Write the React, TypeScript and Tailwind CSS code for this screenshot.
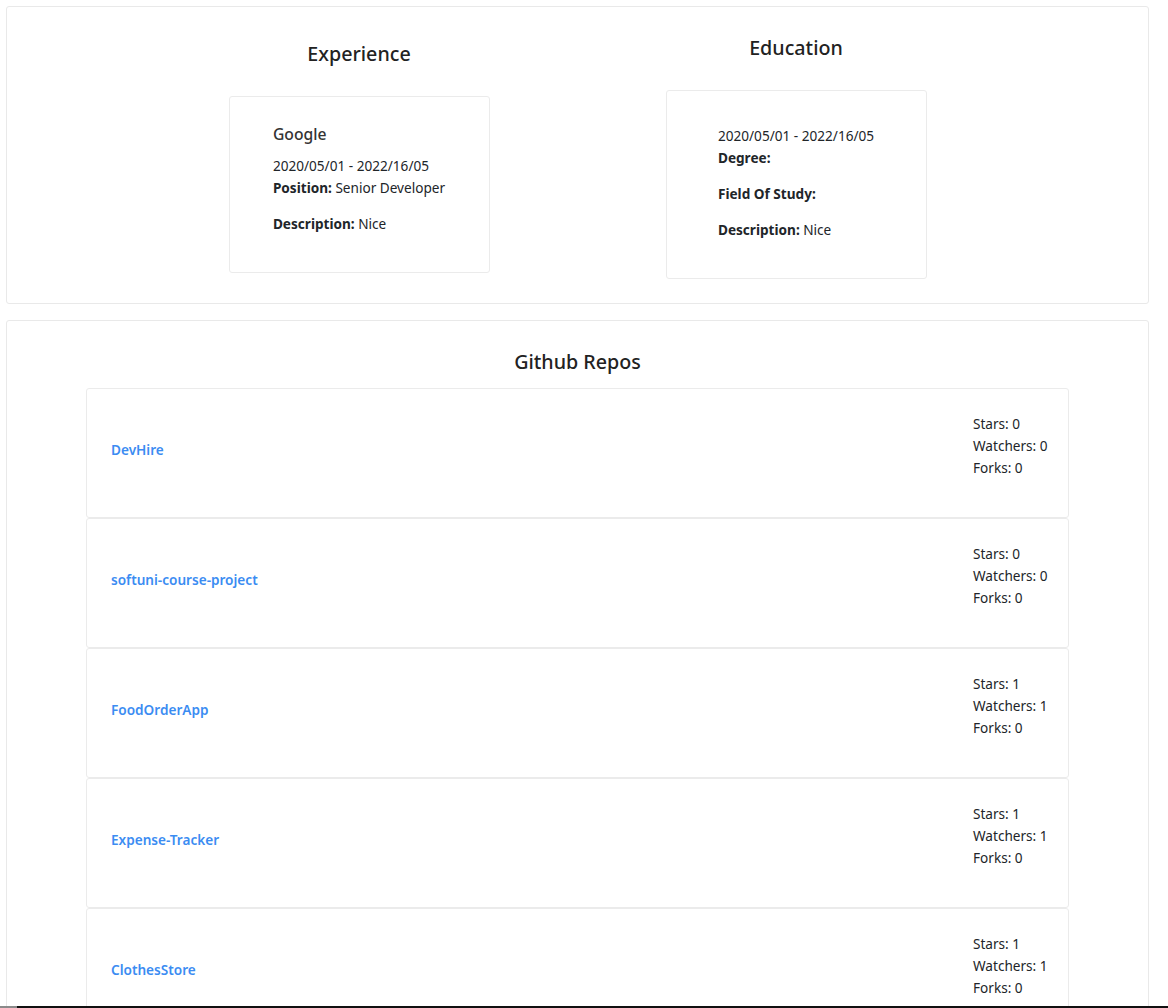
import React from 'react';

const repos = [
  { name: 'DevHire', stars: 0, watchers: 0, forks: 0 },
  { name: 'softuni-course-project', stars: 0, watchers: 0, forks: 0 },
  { name: 'FoodOrderApp', stars: 1, watchers: 1, forks: 0 },
  { name: 'Expense-Tracker', stars: 1, watchers: 1, forks: 0 },
  { name: 'ClothesStore', stars: 1, watchers: 1, forks: 0 },
];

const Label: React.FC<{ label: string; value?: string }> = ({ label, value }) => (
  <p className="mb-[14px]">
    <strong className="font-bold">{label}:</strong>
    {value ? ` ${value}` : ''}
  </p>
);

export default function App() {
  return (
    <div className="min-h-screen bg-white text-[13.6px] leading-[22px] text-[#212529] font-['Noto_Sans','Open_Sans',sans-serif]">
      <div className="pl-[6px] pr-[19px] pt-[6px] pb-[20px] flex flex-col gap-[16px]">
        {/* Experience / Education */}
        <section className="border border-[#e9e9e9] rounded-[3px] pt-[28px] pb-[24px] flex justify-center items-center">
          <div className="w-[437px] flex flex-col items-center">
            <h3 className="text-[19.7px] leading-[25px] font-medium text-[#222] mb-[30px]">Experience</h3>
            <div className="w-[261px] border border-[#ebebeb] rounded-[3px] pt-[25px] pb-[23px] flex justify-center">
              <div>
                <h4 className="text-[15.7px] leading-[24px] font-medium text-[#333] mb-[9px]">Google</h4>
                <p>2020/05/01 - 2022/16/05</p>
                <Label label="Position" value="Senior Developer" />
                <Label label="Description" value="Nice" />
              </div>
            </div>
          </div>
          <div className="w-[437px] flex flex-col items-center">
            <h3 className="text-[19.7px] leading-[25px] font-medium text-[#222] mb-[30px]">Education</h3>
            <div className="w-[261px] border border-[#ebebeb] rounded-[3px] pt-[34px] pb-[23px] flex justify-center">
              <div>
                <p>2020/05/01 - 2022/16/05</p>
                <Label label="Degree" />
                <Label label="Field Of Study" />
                <Label label="Description" value="Nice" />
              </div>
            </div>
          </div>
        </section>

        {/* Github repos */}
        <section className="border border-[#e9e9e9] rounded-[3px] pt-[28px] pb-[24px] flex flex-col items-center">
          <h3 className="text-[19.7px] leading-[25px] font-medium text-[#222] mb-[14px]">Github Repos</h3>
          <div className="w-[983px] flex flex-col">
            {repos.map((r) => (
              <div
                key={r.name}
                className="border border-[#ebebeb] rounded-[3px] pt-[24px] pb-[24px] px-[24px] flex items-center justify-between"
              >
                <a href="#" className="text-[#3b8cf2] font-semibold pb-[6px]">
                  {r.name}
                </a>
                <div className="w-[71px] whitespace-nowrap mb-[14px]">
                  <p>Stars: {r.stars}</p>
                  <p>Watchers: {r.watchers}</p>
                  <p>Forks: {r.forks}</p>
                </div>
              </div>
            ))}
          </div>
        </section>
      </div>
      <div className="fixed bottom-0 left-0 right-0 h-[2px] flex">
        <div className="w-[17px] bg-[#8a8a8a]" />
        <div className="flex-1 bg-[#111]" />
      </div>
    </div>
  );
}
